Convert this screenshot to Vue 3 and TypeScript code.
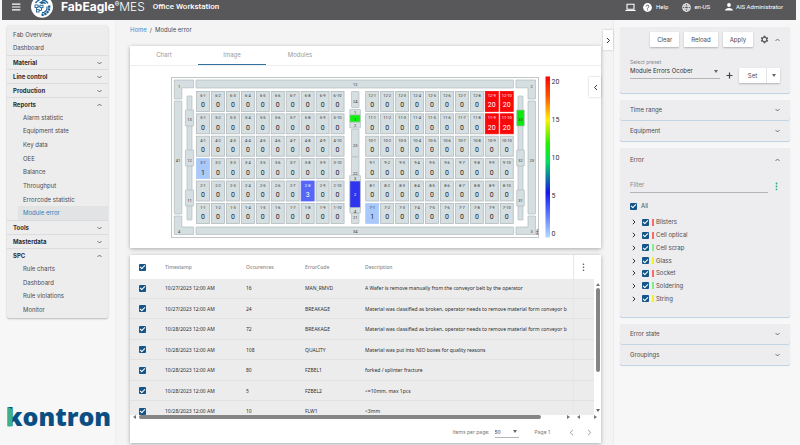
<script setup lang="ts">
import { ref } from 'vue'

interface MenuGroup { name: string; open: boolean; items: string[] }
interface Box { x: number; y: number; w: number; h: number; label?: string; ly?: number; fill?: string; ink?: string }
interface Cell { x: number; y: number; label: string; value: number }

const topLinks = ['Fab Overview', 'Dashboard']
const groups = ref<MenuGroup[]>([
  { name: 'Material', open: false, items: [] },
  { name: 'Line control', open: false, items: [] },
  { name: 'Production', open: false, items: [] },
  {
    name: 'Reports',
    open: true,
    items: ['Alarm statistic', 'Equipment state', 'Key data', 'OEE', 'Balance', 'Throughput', 'Errorcode statistic', 'Module error'],
  },
  { name: 'Tools', open: false, items: [] },
  { name: 'Masterdata', open: false, items: [] },
  { name: 'SPC', open: true, items: ['Rule charts', 'Dashboard', 'Rule violations', 'Monitor'] },
])

const tabs = ['Chart', 'Image', 'Modules']
const activeTab = ref('Image')

const counts: Record<string, number> = { '3-1': 1, '2-8': 3, '7-1': 1, '12-9': 20, '12-10': 20, '11-9': 20, '11-10': 20 }
const cells: Cell[] = []
for (const side of [{ x: 66.5, top: 6 }, { x: 235.7, top: 12 }]) {
  for (let r = 0; r < 6; r++) {
    for (let c = 0; c < 10; c++) {
      const label = `${side.top - r}-${c + 1}`
      cells.push({ x: side.x + c * 14.95, y: 25.4 + r * 22.4, label, value: counts[label] ?? 0 })
    }
  }
}
function cellClass(value: number): string {
  if (value >= 20) return 'hot'
  if (value >= 3) return 'warm'
  return value > 0 ? 'low' : ''
}

const boxes: Box[] = [
  { x: 66, y: 14, w: 317.6, h: 8 },
  { x: 66, y: 161, w: 317.6, h: 7.5 },
  { x: 44.3, y: 35, w: 7.5, h: 113, label: '41', ly: 94 },
  { x: 398, y: 35, w: 7.5, h: 113, label: '23', ly: 94 },
  { x: 57, y: 30, w: 5, h: 124 },
  { x: 55.4, y: 44, w: 8.2, h: 16, label: '13', ly: 53 },
  { x: 55.4, y: 84, w: 8.2, h: 16, label: '12', ly: 94 },
  { x: 55.4, y: 124, w: 8.2, h: 16, label: '11', ly: 134 },
  { x: 388, y: 30, w: 5, h: 124 },
  { x: 386.7, y: 44, w: 7.6, h: 16, label: '33', ly: 53, fill: '#0ee80e' },
  { x: 386.7, y: 84, w: 7.6, h: 16, label: '32', ly: 94 },
  { x: 386.7, y: 124, w: 7.6, h: 16, label: '31', ly: 134 },
  { x: 221.5, y: 25.5, w: 7.5, h: 16, label: '24', ly: 35 },
  { x: 221.5, y: 63, w: 7.5, h: 28, label: '23', ly: 79 },
  { x: 221.5, y: 91, w: 7.5, h: 18, label: '22', ly: 107 },
  { x: 221.5, y: 147, w: 7.5, h: 10.5, label: '21', ly: 151 },
  { x: 219.8, y: 43.4, w: 10.6, h: 5.6, label: '1', ly: 46.4 },
  { x: 219.8, y: 56, w: 10.6, h: 6, label: '2', ly: 59.5 },
  { x: 219.8, y: 49, w: 10.6, h: 7, label: '1', ly: 53, fill: '#0cf00c' },
  { x: 219.8, y: 109.4, w: 10.6, h: 6, label: '3', ly: 112.5 },
  { x: 219.8, y: 141.5, w: 10.6, h: 5.6, label: '4', ly: 145 },
  { x: 219.8, y: 115, w: 10.6, h: 26.5, label: '2', ly: 128, fill: '#2f35ee', ink: '#ffffff' },
]

const legend = [{ v: 20, y: 15.5 }, { v: 15, y: 53.5 }, { v: 10, y: 91 }, { v: 5, y: 129 }, { v: 0, y: 167 }]

const rows = [
  { time: '10/27/2023 12:00 AM', n: 16, code: 'MAN_RMVD', text: 'A Wafer is remove manually from the conveyor belt by the operator' },
  { time: '10/27/2023 12:00 AM', n: 24, code: 'BREAKAGE', text: 'Material was classified as broken, operator needs to remove material form conveyor b' },
  { time: '10/28/2023 12:00 AM', n: 72, code: 'BREAKAGE', text: 'Material was classified as broken, operator needs to remove material form conveyor b' },
  { time: '10/28/2023 12:00 AM', n: 108, code: 'QUALITY', text: 'Material was put into NIO boxes for quality reasons' },
  { time: '10/28/2023 12:00 AM', n: 80, code: 'FZBEL1', text: 'forked / splinter fracture' },
  { time: '10/28/2023 12:00 AM', n: 5, code: 'FZBEL2', text: '<=10mm, max 1pcs' },
  { time: '10/28/2023 12:00 AM', n: 10, code: 'FLW1', text: '<3mm' },
]

const errors = [
  { name: 'Blisters', tone: 'red' },
  { name: 'Cell optical', tone: 'red' },
  { name: 'Cell scrap', tone: 'green' },
  { name: 'Glass', tone: 'yellow' },
  { name: 'Socket', tone: 'red' },
  { name: 'Soldering', tone: 'green' },
  { name: 'String', tone: 'yellow' },
]
</script>

<template>
  <div class="app">
    <header class="topbar">
      <button class="icon-btn" type="button" aria-label="Menu">
        <svg width="9" height="8" viewBox="0 0 9 8"><path d="M0 1.200h8.400M0 4h8.400M0 6.800h8.400" stroke="#fff" stroke-width="1.200" /></svg>
      </button>
      <svg class="emblem" width="24" height="20" viewBox="0 0 24 20">
        <circle cx="12" cy="6.800" r="11" fill="#fff" />
        <path d="M5.500 3.200a7.400 7.400 0 0 1 4-3.200M12 0c3 0 5 1.400 6 3.600" fill="none" stroke="#1b6196" stroke-width="1.300" />
        <path d="M9 2.500l3-1.500 3 1 1.500 2-3-.6-2 .6z" fill="#1b6196" />
        <g fill="none" stroke="#1b6196" stroke-width=".9"><rect x="5" y="5" width="3" height="2.500" /><rect x="10" y="5.200" width="3" height="2.500" /><rect x="6.500" y="9.600" width="2.600" height="2.400" /><path d="M8 6.300h2M6.500 7.500v2M11.500 7.700v2.800H9" /></g>
        <path d="M19 5.500c1.200 5-2.500 9.300-7.500 9.300" fill="none" stroke="#1b6196" stroke-width="2.400" stroke-dasharray="2.200 .7" />
        <path d="M17 6.500c.6 3.500-2 6-5 6.200" fill="none" stroke="#1b6196" stroke-width="1.200" />
      </svg>
      <span class="brand"><b>FabEagle<sup>®</sup></b><span>MES</span></span>
      <span class="station">Office Workstation</span>
      <nav class="top-tools">
        <a href="#" aria-label="Screen"><svg width="11" height="9" viewBox="0 0 11 9"><path d="M2 1.200h7v5H2zM.4 7.500h10.200" fill="none" stroke="#fff" stroke-width="1.100" /></svg></a>
        <a href="#" class="help"><svg width="9" height="9" viewBox="0 0 9 9"><circle cx="4.500" cy="4.500" r="4.400" fill="#fff" /><path d="M3.100 3.500a1.400 1.400 0 1 1 2.100 1.200c-.5.3-.7.5-.7 1M4.500 6.400v1" fill="none" stroke="#58585a" stroke-width=".9" /></svg>Help</a>
        <a href="#" class="lang"><svg width="9" height="9" viewBox="0 0 9 9"><g fill="none" stroke="#fff" stroke-width=".9"><circle cx="4.500" cy="4.500" r="3.900" /><ellipse cx="4.500" cy="4.500" rx="1.800" ry="3.900" /><path d="M.8 3.100h7.400M.8 5.900h7.400" /></g></svg>en-US</a>
        <a href="#" class="user"><svg width="8" height="8" viewBox="0 0 8 8"><circle cx="4" cy="2" r="1.900" fill="#fff" /><path d="M0 7.600c0-3.600 8-3.600 8 0z" fill="#fff" /></svg>AIS Administrator</a>
      </nav>
    </header>

    <div class="body">
      <aside class="side">
        <nav class="menu">
          <ul class="links top">
            <li v-for="l in topLinks" :key="l"><a href="#">{{ l }}</a></li>
          </ul>
          <section v-for="g in groups" :key="g.name">
            <button class="group" type="button" :aria-expanded="g.open" @click="g.open = !g.open">
              {{ g.name }}
              <svg class="chev" :class="{ up: g.open }" width="5" height="4" viewBox="0 0 5 4"><path d="M.5 1l2 2 2-2" /></svg>
            </button>
            <ul v-if="g.open && g.items.length" class="links sub" :class="{ long: g.items.length > 4 }">
              <li v-for="i in g.items" :key="i" :class="{ current: i === 'Module error' }"><a href="#">{{ i }}</a></li>
            </ul>
          </section>
        </nav>
        <svg class="kontron" viewBox="0 0 102 26" role="img" aria-label="kontron">
          <text x="-1" y="22">kontron</text>
          <path d="M.5 3l5 2v9.500l-.6 8H.5z" fill="#3fae8c" />
        </svg>
      </aside>

      <main class="main">
        <button class="expander" type="button" aria-label="Collapse filters"><svg width="5" height="7" viewBox="0 0 5 7"><path d="M1 1l2.500 2.500L1 6" /></svg></button>
        <nav class="crumbs"><a href="#">Home</a><span>/</span><span class="here">Module error</span></nav>

        <section class="card">
          <div class="tabs" role="tablist">
            <button v-for="t in tabs" :key="t" role="tab" type="button" :aria-selected="t === activeTab" :class="{ active: t === activeTab }" @click="activeTab = t">{{ t }}</button>
          </div>
          <div class="figure">
            <svg class="module" viewBox="0 0 471 182">
              <defs>
                <linearGradient id="scale" x1="0" y1="0" x2="0" y2="1">
                  <stop offset="0" stop-color="#ff0000" />
                  <stop offset=".13" stop-color="#ff5a00" />
                  <stop offset=".27" stop-color="#fff000" />
                  <stop offset=".42" stop-color="#20f000" />
                  <stop offset=".53" stop-color="#00e060" />
                  <stop offset=".72" stop-color="#1414f0" />
                  <stop offset=".8" stop-color="#3a50ff" />
                  <stop offset="1" stop-color="#b4dcff" />
                </linearGradient>
              </defs>
              <rect x="41.500" y="11.500" width="367" height="160" fill="#fff" stroke="#c3c6c8" />
              <g class="part">
                <path d="M44.300 14h19.300v7.800H51.800V33h-7.500z" />
                <path d="M386 14h19.500v19H398V21.800h-12z" />
                <path d="M44.300 150h7.500v11h11.800v7.500H44.300z" />
                <path d="M405.500 150H398v11h-12v7.500h19.500z" />
              </g>
              <g v-for="(b, i) in boxes" :key="i" class="part">
                <rect :x="b.x" :y="b.y" :width="b.w" :height="b.h" :fill="b.fill ?? '#d5dee0'" rx=".5" />
                <text v-if="b.label" class="tiny" :x="b.x + b.w / 2" :y="(b.ly ?? 0) + 1.500" :fill="b.ink ?? '#333333'">{{ b.label }}</text>
              </g>
              <g class="tiny">
                <text x="49" y="21.500">1</text>
                <text x="401.500" y="21.500">2</text>
                <text x="49" y="166.500">4</text>
                <text x="401.500" y="166.500">3</text>
                <text x="225.300" y="20">12</text>
                <text x="225.300" y="167">34</text>
                <text x="407" y="165.500">4</text>
                <text x="407" y="169">8</text>
              </g>
              <g v-for="c in cells" :key="c.label" class="cell" :class="cellClass(c.value)">
                <rect :x="c.x" :y="c.y" width="13" height="20" />
                <text class="tiny" :x="c.x + 6.500" :y="c.y + 5.500">{{ c.label }}</text>
                <text class="count" :x="c.x + 6.500" :y="c.y + 16">{{ c.value }}</text>
              </g>
              <rect x="415.500" y="10.500" width="4.500" height="161" fill="url(#scale)" />
              <text v-for="l in legend" :key="l.v" class="tick" x="421.500" :y="l.y + 2.500">{{ l.v }}</text>
            </svg>
            <button class="legend-btn" type="button" aria-label="Show legend"><svg width="5" height="7" viewBox="0 0 5 7"><path d="M4 1L1.500 3.500 4 6" /></svg></button>
          </div>
        </section>

        <section class="card">
          <div class="grid-area">
            <div class="table-wrap">
              <table>
                <thead>
                  <tr>
                    <th class="c-check"><input type="checkbox" checked aria-label="Select all rows" /></th>
                    <th class="c-time">Timestamp</th>
                    <th class="c-num">Occurences</th>
                    <th class="c-code">ErrorCode</th>
                    <th>Description</th>
                    <th class="c-menu"><button class="icon-btn" type="button" aria-label="Columns"><svg width="3" height="9" viewBox="0 0 3 9" fill="#555"><circle cx="1.500" cy="1.300" r=".8" /><circle cx="1.500" cy="4.300" r=".8" /><circle cx="1.500" cy="7.300" r=".8" /></svg></button></th>
                  </tr>
                </thead>
                <tbody>
                  <tr v-for="(r, i) in rows" :key="i">
                    <td class="c-check"><input type="checkbox" checked :aria-label="`Select ${r.code}`" /></td>
                    <td>{{ r.time }}</td>
                    <td>{{ r.n }}</td>
                    <td>{{ r.code }}</td>
                    <td class="desc">{{ r.text }}</td>
                    <td class="c-menu"></td>
                  </tr>
                </tbody>
              </table>
            </div>
            <div class="vbar"><i class="tri up"></i><b></b><i class="tri down"></i></div>
          </div>
          <div class="hbar"><i class="tri left"></i><b></b><i class="tri right"></i><i class="tri left"></i><i class="tri right"></i></div>
          <footer class="pager">
            <label for="per-page">Items per page:</label>
            <span class="pick small"><select id="per-page"><option>50</option></select><i class="tri down"></i></span>
            <span class="page">Page 1</span>
            <button class="icon-btn" type="button" aria-label="Previous page"><svg width="5" height="7" viewBox="0 0 5 7"><path d="M4 .8L1.200 3.500 4 6.200" /></svg></button>
            <button class="icon-btn" type="button" aria-label="Next page"><svg width="5" height="7" viewBox="0 0 5 7"><path d="M1 .8l2.800 2.700L1 6.200" /></svg></button>
          </footer>
        </section>
      </main>

      <aside class="filters">
        <section class="panel preset">
          <div class="actions">
            <button class="btn" type="button">Clear</button>
            <button class="btn" type="button">Reload</button>
            <button class="btn" type="button">Apply</button>
            <button class="icon-btn gear" type="button" aria-label="Settings">
              <svg width="9" height="9" viewBox="0 0 24 24"><path fill="#555" fill-rule="evenodd" d="M19.400 13a7.500 7.500 0 0 0 0-2l2.400-1.800-2.200-4-2.900 1.200a8 8 0 0 0-1.800-1L14.500 2h-5l-.4 3.400a8 8 0 0 0-1.800 1L4.400 5.200l-2.200 4L4.600 11a7.500 7.500 0 0 0 0 2l-2.400 1.800 2.200 4 2.900-1.200a8 8 0 0 0 1.800 1l.4 3.400h5l.4-3.400a8 8 0 0 0 1.800-1l2.900 1.200 2.200-4zM12 16.500a4.500 4.500 0 1 1 0-9 4.500 4.500 0 0 1 0 9z" /></svg>
            </button>
            <svg class="chev up" width="5" height="4" viewBox="0 0 5 4"><path d="M.5 1l2 2 2-2" /></svg>
          </div>
          <div class="preset-row">
            <div class="field">
              <label for="preset">Select preset</label>
              <span class="pick"><select id="preset"><option>Module Errors Ocober</option></select><i class="tri down"></i></span>
            </div>
            <button class="icon-btn add" type="button" aria-label="Add preset"><svg width="7" height="7" viewBox="0 0 7 7"><path d="M3.500 .5v6M.5 3.500h6" stroke="#444" stroke-width="1.200" /></svg></button>
            <div class="split"><button type="button">Set</button><button class="more" type="button" aria-label="More"><i class="tri down"></i></button></div>
          </div>
        </section>

        <div class="stack">
          <button class="panel bar" type="button">Time range<svg class="chev" width="5" height="4" viewBox="0 0 5 4"><path d="M.5 1l2 2 2-2" /></svg></button>
          <button class="panel bar" type="button">Equipment<svg class="chev" width="5" height="4" viewBox="0 0 5 4"><path d="M.5 1l2 2 2-2" /></svg></button>
        </div>

        <section class="panel error">
          <button class="bar" type="button">Error<svg class="chev up" width="5" height="4" viewBox="0 0 5 4"><path d="M.5 1l2 2 2-2" /></svg></button>
          <div class="search">
            <input type="text" placeholder="Filter" aria-label="Filter" />
            <button class="icon-btn" type="button" aria-label="Filter options"><svg width="3" height="9" viewBox="0 0 3 9" fill="#22b07d"><circle cx="1.500" cy="1.500" r=".9" /><circle cx="1.500" cy="4.400" r=".9" /><circle cx="1.500" cy="7.300" r=".9" /></svg></button>
          </div>
          <label class="all"><input type="checkbox" checked />All</label>
          <ul class="tree">
            <li v-for="e in errors" :key="e.name">
              <button class="icon-btn" type="button" :aria-label="`Expand ${e.name}`"><svg width="4" height="6" viewBox="0 0 4 6"><path d="M.8 .8L3 3 .8 5.200" /></svg></button>
              <label><input type="checkbox" checked /><i class="tone" :class="e.tone"></i>{{ e.name }}</label>
            </li>
          </ul>
        </section>

        <div class="stack">
          <button class="panel bar" type="button">Error state<svg class="chev" width="5" height="4" viewBox="0 0 5 4"><path d="M.5 1l2 2 2-2" /></svg></button>
          <button class="panel bar" type="button">Groupings<svg class="chev" width="5" height="4" viewBox="0 0 5 4"><path d="M.5 1l2 2 2-2" /></svg></button>
        </div>
      </aside>
    </div>
  </div>
</template>

<style>
body { background: #f7f7f7; }
</style>

<style scoped>
* { box-sizing: border-box; }
.app { display: flex; flex-direction: column; min-height: 100vh; font: 6px/10px Inter, Roboto, "Liberation Sans", sans-serif; color: #4c4c4e; }
button { font: inherit; color: inherit; background: none; border: 0; padding: 0; margin: 0; cursor: pointer; }
a { color: inherit; text-decoration: none; }
ul { list-style: none; margin: 0; padding: 0; }
svg { display: block; flex: none; }
.icon-btn { display: grid; place-items: center; }

.topbar { display: flex; align-items: center; height: 20px; margin: 0 4px 0 2px; padding: 0 13px 6px 10px; background: #58585a; color: #fff; }
.emblem { align-self: flex-start; margin-left: 9px; }
.brand { display: flex; margin-left: 7px; font: 300 12px/14px Inter, sans-serif; }
.brand b { font-weight: 700; }
.brand sup { font-size: 7px; line-height: 7px; vertical-align: 4px; }
.station { margin-left: 8px; font-family: Roboto, sans-serif; font-size: 8px; font-weight: 500; }
.top-tools { display: flex; align-items: center; margin-left: auto; font-family: Roboto, sans-serif; }
.top-tools a { display: flex; align-items: center; }
.help { margin-left: 7px; gap: 4px; }
.lang { margin-left: 14px; gap: 3px; }
.user { margin-left: 15px; gap: 3px; }

.body { flex: 1; display: grid; grid-template-columns: 116px minmax(0, 1fr) 187px; }
.side { display: flex; flex-direction: column; padding: 5px 7px 15px; border-right: 1px solid #efefef; }
.menu { padding: 3px 0 1px; background: #ededee; border-radius: 2px; box-shadow: 0 1px 2px #00000040; }
.links { display: flex; flex-direction: column; height: 55px; }
.links.top { height: 27px; }
.links.long { height: 109px; }
.links li { flex: 1; display: flex; align-items: center; padding-left: 6px; }
.links.sub li { margin-left: 11px; padding-left: 5px; }
.links .current { background: #e2e3e5; color: #2d7db5; }
.group { display: flex; align-items: center; justify-content: space-between; width: 100%; height: 14px; padding: 0 6px; border-top: 1px solid #dcdcde; font-weight: 700; color: #2e2e30; }
.chev { fill: none; stroke: #555; stroke-width: 0.8; overflow: visible; }
.chev.up { transform: rotate(180deg); }
.kontron { width: 102px; margin-top: auto; overflow: visible; }
.kontron text { font: 800 25px "Open Sans", "Noto Sans", sans-serif; fill: #0b4f82; }

.main { position: relative; display: flex; flex-direction: column; gap: 7px; padding: 5px 12px 2px 14px; background: #f4f4f5; }
.crumbs { display: flex; gap: 3px; margin-bottom: 4px; }
.crumbs a { color: #2b8fd6; }
.expander, .legend-btn { position: absolute; display: grid; place-items: center; background: #fff; box-shadow: 0 0 2px #00000040; }
.expander { top: 10px; right: 0; width: 10px; height: 20px; }
.legend-btn { top: 11px; right: 0; width: 12px; height: 20px; }
.expander svg, .legend-btn svg { fill: none; stroke: #333; stroke-width: 1; }
.card { background: #fff; box-shadow: 0 1px 4px #00000050; }
.tabs { display: flex; height: 20px; border-bottom: 1px solid #ededed; }
.tabs button { width: 68px; color: #9a9a9c; border-bottom: 1px solid transparent; }
.tabs .active { border-bottom-color: #33719f; }
.figure { position: relative; }
.module { width: 100%; font-family: Roboto, "Liberation Sans", sans-serif; text-anchor: middle; }
.part path, .part rect { stroke: #b2bbbd; stroke-width: 0.7; }
.part path { fill: #d5dee0; }
.tiny { font-size: 4px; fill: #333; stroke: none; }
.part .tiny { fill: revert-layer; }
.cell rect { fill: #d5dee0; stroke: #b2bbbd; stroke-width: 0.8; }
.count { font-size: 7px; fill: #222; }
.low rect { fill: #a9c9fb; stroke: #a9c9fb; }
.warm rect { fill: #5866f5; stroke: #5866f5; }
.hot rect { fill: #f80808; stroke: #f80808; }
.warm text, .hot text { fill: #fff; }
.tick { font-size: 7px; fill: #333; text-anchor: start; }

.grid-area { display: grid; grid-template-columns: minmax(0, 1fr) 7px; height: 160px; }
.table-wrap { overflow: hidden; }
table { width: 100%; height: 167px; table-layout: fixed; border-collapse: collapse; font-family: "Noto Sans", sans-serif; font-size: 5px; line-height: 8px; }
th, td { padding: 0; text-align: left; white-space: nowrap; overflow: hidden; font-weight: 400; }
thead tr { height: 24px; }
th { color: #88888a; font-weight: 500; }
tbody tr { background: #ececed; }
td { border-bottom: 1px solid #e2e2e3; color: #2c2c2e; }
.c-check { width: 35px; padding-left: 9px; }
.c-time { width: 81px; }
.c-num { width: 59px; }
.c-code { width: 60px; }
.c-menu { width: 21px; border-left: 1px solid #e6e6e7; }
.c-menu .icon-btn { width: 100%; }
input[type="checkbox"] { appearance: none; display: grid; place-content: center; flex: none; width: 7px; height: 7px; margin: 0; border-radius: 1px; background: #14568a; }
input[type="checkbox"]:checked::after { content: ""; width: 4px; height: 2px; margin-bottom: 1px; border: solid #fff; border-width: 0 0 1px 1px; transform: rotate(-45deg); }
.tri { display: block; flex: none; width: 0; height: 0; border: 2px solid transparent; }
.tri.up { border-bottom: 3px solid #777; border-top: 0; }
.tri.down { border-top: 3px solid #666; border-bottom: 0; }
.tri.left { border-right: 3px solid #777; border-left: 0; }
.tri.right { border-left: 3px solid #777; border-right: 0; }
.vbar { display: flex; flex-direction: column; align-items: center; padding: 28px 0 3px; }
.vbar b { width: 4px; height: 84px; margin: 2px 0 auto; border-radius: 2px; background: #858585; }
.hbar { display: flex; align-items: center; height: 4px; padding: 0 4px 0 3px; }
.hbar b { flex: 0 1 402px; height: 4px; margin: 0 auto 0 3px; border-radius: 2px; background: #858585; }
.hbar b + .tri { margin-right: 7px; }
.hbar .left:nth-of-type(3) { margin-right: 14px; }
.pager { display: flex; align-items: center; justify-content: flex-end; height: 24px; padding: 2px 9px 0 0; font-size: 5px; color: #77777a; }
.pager svg { fill: none; stroke: #888; stroke-width: 0.8; }
.pager .page { margin: 0 19px 0 16px; }
.pager .icon-btn + .icon-btn { margin-left: 13px; }
.pick { display: grid; grid-template-columns: minmax(0, 1fr) 6px; align-items: center; border-bottom: 1px solid #b5b5b8; }
.pick select { appearance: none; width: 100%; border: 0; padding: 0; margin: 0; background: none; font: inherit; color: #333; }
.pick.small { width: 24px; margin-left: 5px; }

.filters { display: flex; flex-direction: column; gap: 7px; padding: 7px 10px 0 6px; border-left: 1px solid #ececec; }
.panel { background: #ededef; border-radius: 2px; box-shadow: 0 1px 1px #8fb3cf90; }
.stack { display: flex; flex-direction: column; gap: 1px; }
.bar { display: flex; align-items: center; justify-content: space-between; width: 100%; height: 20px; padding: 0 10px; }
.preset { height: 66px; padding: 5px 10px 0; }
.actions { display: flex; align-items: center; justify-content: flex-end; gap: 5px; }
.btn { height: 15px; padding: 0 7px; background: #fff; border-radius: 1px; box-shadow: 0 1px 2px #00000040; }
.btn:first-child { padding: 0 7px; }
.gear { margin: 0 1px 0 2px; }
.preset-row { display: flex; align-items: flex-end; gap: 6px; margin-top: 12px; }
.field { flex: 1; padding-bottom: 4px; }
.field label { display: block; font-size: 5px; line-height: 6px; color: #88888a; }
.field .pick { padding: 1px 0 2px; }
.add { height: 15px; }
.split { display: flex; height: 15px; background: #fff; border-radius: 1px; box-shadow: 0 1px 2px #00000040; }
.split button { width: 27px; }
.split .more { display: grid; place-items: center; width: 14px; border-left: 1px solid #e4e4e4; }
.error { height: 169px; padding-top: 2px; }
.search { display: flex; align-items: center; justify-content: space-between; margin: 9px 12px 0 10px; }
.search input { width: 138px; height: 14px; padding: 0 0 2px; border: 0; border-bottom: 1px solid #b5b5b8; background: none; font: inherit; color: #333; }
.search input::placeholder { color: #88888a; }
.all { display: flex; align-items: center; gap: 4px; margin: 8px 10px 5px; }
.tree { display: flex; flex-direction: column; height: 89px; padding: 0 12px; }
.tree li { flex: 1; display: flex; align-items: center; gap: 6px; }
.tree label { display: flex; align-items: center; }
.tree svg { fill: none; stroke: #333; stroke-width: 1; }
.tone { width: 2px; height: 7px; margin: 0 2px 0 3px; }
.red { background: #fa6a6a; }
.green { background: #7df08a; }
.yellow { background: #f7ee2c; }
</style>
